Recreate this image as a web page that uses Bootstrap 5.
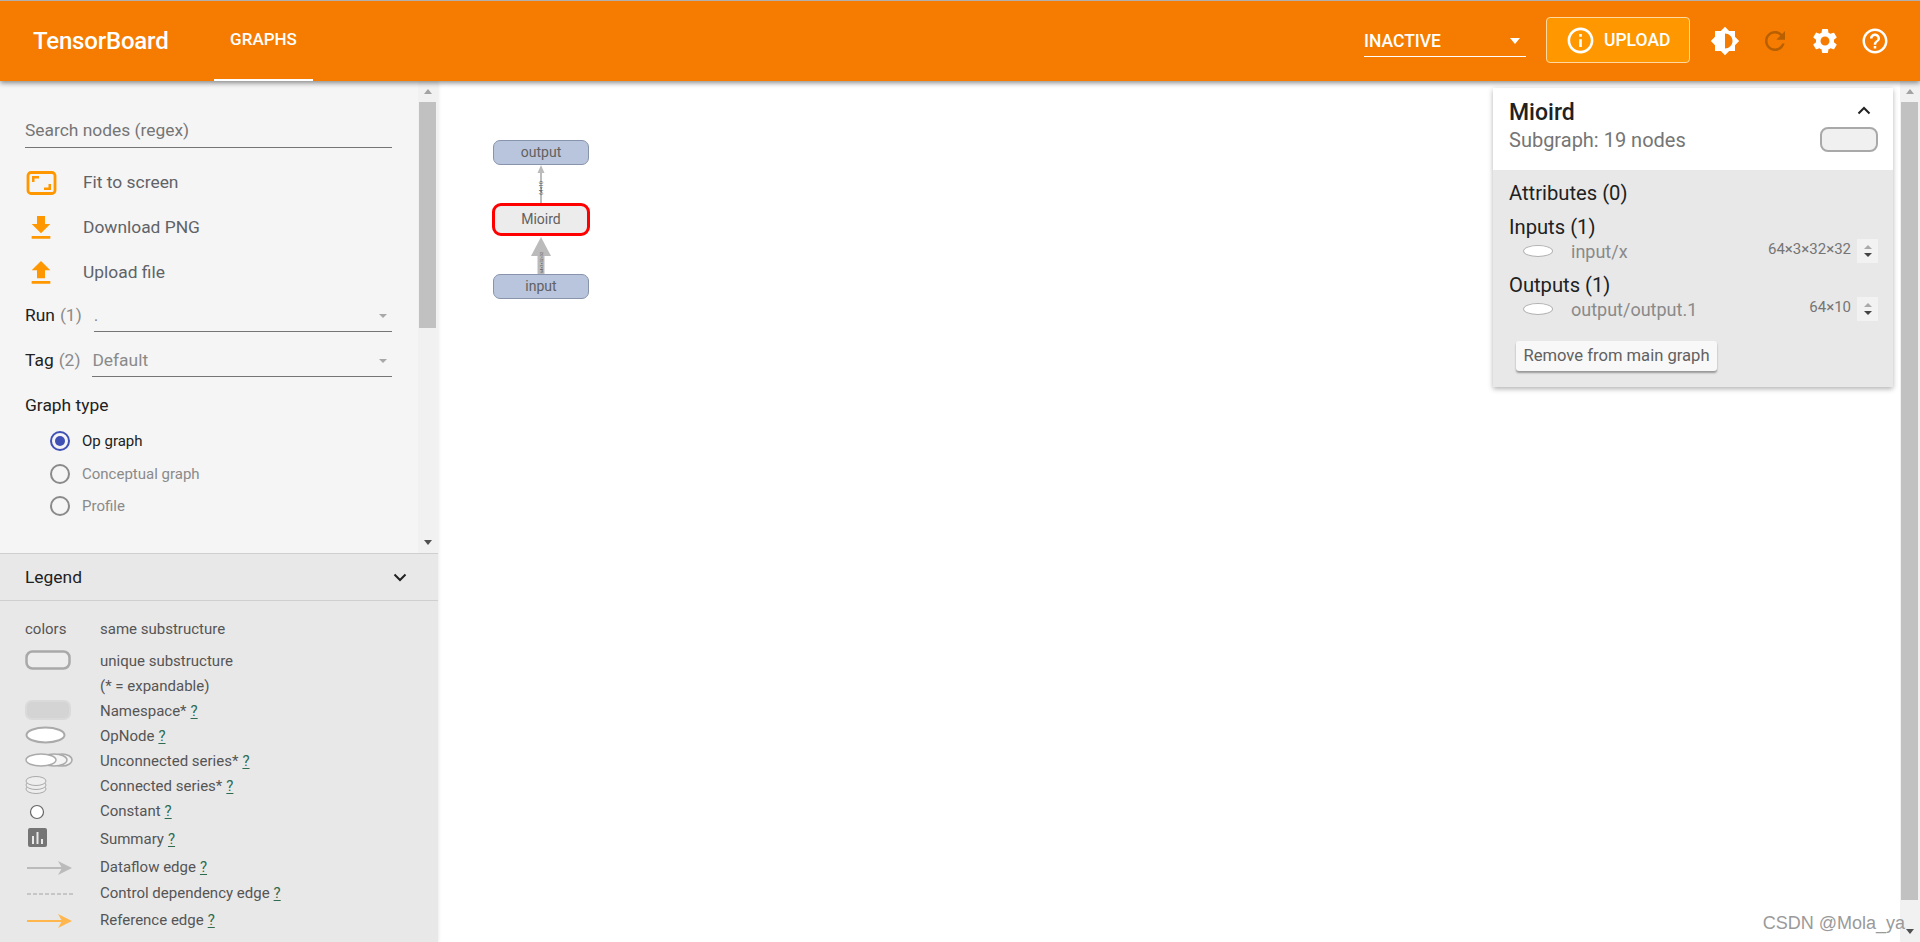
<!DOCTYPE html>
<html lang="en">
<head>
<meta charset="utf-8">
<title>TensorBoard</title>
<link rel="stylesheet" href="https://cdn.jsdelivr.net/npm/bootstrap@5.3.0/dist/css/bootstrap.min.css">
<style>
html,body{height:100%;overflow:hidden;}
body{font-family:Roboto,"Liberation Sans",sans-serif;background:#fff;color:#212121;font-size:15px;}
.tb-page{height:942px;position:relative;}
.tb-head{height:81px;flex:none;background:#f57c00;border-top:1px solid #b0b0b0;color:#fff;position:relative;z-index:5;box-shadow:0 2px 5px rgba(0,0,0,.45);padding-left:33px;}
.tb-brand{font-size:24px;font-weight:500;width:181px;letter-spacing:-.2px;}
.tb-tab{width:99px;height:80px;border-bottom:2px solid #fff;font-size:17px;font-weight:500;}
.tb-run{width:162px;height:31px;margin-top:25px;border-bottom:1px solid #fff;font-size:17.5px;font-weight:500;margin-right:20px;line-height:30px;}
.tb-caret{width:0;height:0;border-left:5.5px solid transparent;border-right:5.5px solid transparent;border-top:6px solid #fff;margin-right:6px;}
.tb-up{width:144px;height:46px;margin-top:16px;background:#ff9800;border:1px solid #ffd9a0;border-radius:4px;color:#fff;font-size:17.5px;font-weight:500;gap:8px;margin-right:20px;padding:0 0 0 18px;}
.tb-tools{padding-right:30px;gap:20px;}
.tb-tools svg{width:30px;height:30px;fill:#fff;}
.tb-tools .tb-off{fill:#b85f00;}
.tb-side{width:438px;flex:none;background:#e8e8e8;position:relative;z-index:2;box-shadow:1px 0 3px rgba(0,0,0,.08);}
.tb-upper{height:472px;flex:none;background:#f5f5f5;}
.tb-ctrl{width:418px;padding:0 26px 0 25px;}
.tb-search{height:67px;border-bottom:1px solid #757575;font-size:17.4px;color:#757575;padding-top:38px;line-height:22px;}
.tb-action{height:45px;font-size:17.4px;color:#5f6368;}
.tb-action svg{fill:#ff9800;}
.tb-ico{width:58px;flex:none;}
.tb-first{margin-top:12px;}
.tb-sel{height:45px;font-size:17.4px;color:#212121;padding-bottom:2px;}
.tb-sel-run{margin-top:-1px;}
.tb-sel .tb-val{flex:1;height:30px;margin-left:12px;border-bottom:1px solid #757575;color:#8a8a8a;line-height:26px;position:relative;margin-top:3px;}
.tb-sel .tb-count{color:#8a8a8a;margin-left:5px;}
.tb-mini{position:absolute;right:5px;top:12px;width:0;height:0;border-left:4px solid transparent;border-right:4px solid transparent;border-top:4px solid #a8a8a8;}
.tb-gt{height:41px;font-size:17.4px;line-height:42px;}
.tb-radio{height:32.5px;padding-left:25px;font-size:15px;color:#8a8a8a;}
.tb-dot{width:20px;height:20px;border:2px solid #8a8a8a;border-radius:50%;margin-right:12px;flex:none;position:relative;}
.tb-radio.tb-on{color:#212121;}
.tb-on .tb-dot{border-color:#3f51b5;}
.tb-on .tb-dot::after{content:"";position:absolute;inset:3px;background:#3f51b5;border-radius:50%;}
.tb-bar{width:20px;flex:none;background:#f1f1f1;position:relative;}
.tb-thumb{position:absolute;background:#c1c1c1;left:1px;right:2px;}
.tb-up-ar,.tb-dn-ar{position:absolute;width:0;height:0;border-left:4.5px solid transparent;border-right:4.5px solid transparent;left:5.5px;}
.tb-up-ar{top:8px;border-bottom:5px solid #a3a3a3;}
.tb-dn-ar{bottom:8px;border-top:5px solid #505050;}
.tb-leghead{height:48px;flex:none;border-top:1px solid #cfcfcf;border-bottom:1px solid #cfcfcf;padding:0 31px 0 25px;font-size:17.4px;}
.tb-leg{padding:16px 0 0 25px;font-size:15px;color:#555;}
.tb-lrow{display:flex;align-items:center;height:25px;}
.tb-lrow-gap{margin-top:7px;}
.tb-lic{width:75px;flex:none;display:flex;align-items:center;padding-bottom:4px;}
.tb-lic-flat{padding-bottom:0;}
.tb-h31{height:31px;}
.tb-h27{height:27px;}
.tb-leg u{color:#2e6b4f;text-underline-offset:2px;}
.tb-main{flex:1;position:relative;background:#fff;}
.tb-node{position:absolute;left:55px;width:96px;background:#b9c5dc;border:1.5px solid #8794ab;border-radius:7px;text-align:center;font-size:14px;color:#616161;height:25px;line-height:22px;}
.tb-sel-node{background:#ececec;border:3px solid #f00;height:33px;width:98px;left:54px;line-height:27px;border-radius:9px;}
.tb-edges{position:absolute;left:0;top:0;}
.tb-info{position:absolute;left:1055px;top:7px;width:400px;box-shadow:0 2px 5px rgba(0,0,0,.3);background:#e8e8e8;z-index:3;}
.tb-ih{height:82px;background:#fff;padding:11px 15px 0 16px;position:relative;}
.tb-it{font-size:23px;font-weight:500;line-height:28px;color:#212121;}
.tb-is{font-size:20px;color:#757575;line-height:26px;}
.tb-ib{padding:10px 15px 20px 16px;height:217px;font-size:20.2px;color:#212121;}
.tb-ih2{line-height:26px;height:34px;}
.tb-ih3{line-height:26px;height:24px;}
.tb-irow{display:flex;align-items:center;height:24px;margin-top:1px;margin-bottom:9px;color:#8a8a8a;font-size:18px;}
.tb-ie{width:30px;height:12px;border:1.5px solid #b0b0b0;background:#fff;border-radius:50%;margin:0 18px 0 14px;flex:none;}
.tb-dim{margin-left:auto;font-size:15px;color:#757575;margin-right:6px;margin-top:-4px;}
.tb-spin{width:21px;height:24px;background:#f2f2f2;display:flex;flex-direction:column;align-items:center;justify-content:center;gap:4px;flex:none;}
.tb-spin i{width:0;height:0;border-left:4px solid transparent;border-right:4px solid transparent;}
.tb-spin .a{border-bottom:4.5px solid #aaa;}
.tb-spin .b{border-top:4.5px solid #444;}
.tb-rm{margin:11px 0 0 7px;height:30px;width:201px;padding:0;background:#f8f8f8;border:0;border-radius:3px;box-shadow:0 2px 2px rgba(0,0,0,.35);font-size:16.6px;color:#616161;}
.tb-pill{width:58px;height:25px;border:2.5px solid #a9a9a9;border-radius:8px;background:#f0f0f0;}
.tb-ipill{position:absolute;right:15px;top:39px;}
.tb-chev{margin:0 7px 6px 0;}
.tb-mark{position:absolute;right:15px;bottom:5px;font-family:"Liberation Sans",sans-serif;font-size:18px;color:#9a9a9a;z-index:4;}
</style>
</head>
<body>
<div class="tb-page d-flex flex-column">
  <header class="tb-head d-flex align-items-start">
    <div class="tb-brand d-flex align-items-center h-100">TensorBoard</div>
    <div class="tb-tab d-flex align-items-center justify-content-center">GRAPHS</div>
    <div class="flex-grow-1"></div>
    <div class="tb-run d-flex align-items-center justify-content-between"><span>INACTIVE</span><span class="tb-caret"></span></div>
    <button type="button" class="btn tb-up d-flex align-items-center justify-content-start">
      <svg width="31" height="31" viewBox="0 0 24 24" fill="#fff"><path d="M11 7h2v2h-2zm0 4h2v6h-2zm1-9C6.480 2 2 6.480 2 12s4.480 10 10 10 10-4.480 10-10S17.520 2 12 2zm0 18c-4.410 0-8-3.590-8-8s3.590-8 8-8 8 3.590 8 8-3.590 8-8 8z"/></svg>
      <span>UPLOAD</span>
    </button>
    <div class="tb-tools d-flex align-items-center h-100">
      <svg viewBox="0 0 24 24"><path d="M20 15.310L23.310 12 20 8.690V4h-4.690L12 .69 8.690 4H4v4.690L.69 12 4 15.310V20h4.690L12 23.310 15.310 20H20v-4.690zM12 18V6c3.310 0 6 2.690 6 6s-2.690 6-6 6z"/></svg>
      <svg class="tb-off" viewBox="0 0 24 24"><path d="M17.650 6.350C16.200 4.900 14.210 4 12 4c-4.420 0-7.990 3.580-7.990 8s3.570 8 7.990 8c3.730 0 6.840-2.550 7.730-6h-2.080c-.82 2.330-3.040 4-5.650 4-3.310 0-6-2.690-6-6s2.690-6 6-6c1.660 0 3.140.69 4.220 1.780L13 11h7V4l-2.350 2.350z"/></svg>
      <svg viewBox="0 0 24 24"><path d="M19.140 12.940c.04-.3.06-.61.06-.94 0-.32-.02-.64-.07-.94l2.030-1.580c.18-.14.23-.41.12-.61l-1.920-3.320c-.12-.22-.37-.29-.59-.22l-2.390.96c-.5-.38-1.030-.7-1.620-.94l-.36-2.540c-.04-.24-.24-.41-.48-.41h-3.840c-.24 0-.43.17-.47.41l-.36 2.540c-.59.24-1.130.57-1.620.94l-2.390-.96c-.22-.08-.47 0-.59.22L2.740 8.870c-.12.21-.08.47.12.61l2.030 1.580c-.05.3-.09.63-.09.94s.02.64.07.94l-2.030 1.580c-.18.14-.23.41-.12.61l1.920 3.320c.12.22.37.29.59.22l2.390-.96c.5.38 1.030.7 1.620.94l.36 2.540c.05.24.24.41.48.41h3.840c.24 0 .44-.17.47-.41l.36-2.540c.59-.24 1.130-.56 1.620-.94l2.390.96c.22.08.47 0 .59-.22l1.920-3.320c.12-.22.07-.47-.12-.61l-2.010-1.580zM12 15.600c-1.980 0-3.600-1.620-3.600-3.600s1.620-3.600 3.600-3.600 3.600 1.620 3.600 3.600-1.620 3.600-3.600 3.600z"/></svg>
      <svg viewBox="0 0 24 24"><path d="M11 18h2v-2h-2v2zm1-16C6.480 2 2 6.480 2 12s4.480 10 10 10 10-4.480 10-10S17.520 2 12 2zm0 18c-4.410 0-8-3.590-8-8s3.590-8 8-8 8 3.590 8 8-3.590 8-8 8zm0-14c-2.210 0-4 1.790-4 4h2c0-1.100.9-2 2-2s2 .9 2 2c0 2-3 1.750-3 5h2c0-2.250 3-2.500 3-5 0-2.210-1.790-4-4-4z"/></svg>
    </div>
  </header>

  <div class="d-flex flex-grow-1" style="min-height:0">
    <aside class="tb-side d-flex flex-column">
      <div class="tb-upper d-flex">
        <div class="tb-ctrl">
          <div class="tb-search">Search nodes (regex)</div>
          <div class="tb-action tb-first d-flex align-items-center">
            <span class="tb-ico"><svg class="d-block" width="32" height="24" viewBox="0 0 32 24"><rect x="3" y="1.500" width="27" height="21" rx="3" fill="none" stroke="#ff9800" stroke-width="2.800"/><path d="M7 5h7v2.500H9.500V11H7zM26 19h-7v-2.500h4.500V13H26z"/></svg></span>Fit to screen
          </div>
          <div class="tb-action d-flex align-items-center">
            <span class="tb-ico"><svg class="d-block" width="32" height="32" viewBox="0 0 24 24"><path d="M19 9h-4V3H9v6H5l7 7 7-7zM5 18v2h14v-2H5z"/></svg></span>Download PNG
          </div>
          <div class="tb-action d-flex align-items-center">
            <span class="tb-ico"><svg class="d-block" width="32" height="32" viewBox="0 0 24 24"><path d="M9 16h6v-6h4l-7-7-7 7h4v6zm-4 2h14v2H5z"/></svg></span>Upload file
          </div>
          <div class="tb-sel tb-sel-run d-flex align-items-center"><span>Run</span><span class="tb-count">(1)</span><div class="tb-val">.<i class="tb-mini"></i></div></div>
          <div class="tb-sel d-flex align-items-center"><span>Tag</span><span class="tb-count">(2)</span><div class="tb-val">Default<i class="tb-mini"></i></div></div>
          <div class="tb-gt">Graph type</div>
          <div class="tb-radio tb-on d-flex align-items-center"><span class="tb-dot"></span>Op graph</div>
          <div class="tb-radio d-flex align-items-center"><span class="tb-dot"></span>Conceptual graph</div>
          <div class="tb-radio d-flex align-items-center"><span class="tb-dot"></span>Profile</div>
        </div>
        <div class="tb-bar"><i class="tb-up-ar"></i><span class="tb-thumb" style="top:21px;height:226px"></span><i class="tb-dn-ar"></i></div>
      </div>
      <div class="tb-leghead d-flex align-items-center justify-content-between">
        <span>Legend</span>
        <svg width="14" height="9" viewBox="0 0 14 9"><path d="M1.500 1.500L7 7l5.500-5.500" fill="none" stroke="#212121" stroke-width="2"/></svg>
      </div>
      <div class="tb-leg">
        <div class="tb-lrow"><span class="tb-lic tb-lic-flat">colors</span>same substructure</div>
        <div class="tb-lrow tb-lrow-gap"><span class="tb-lic"><svg width="46" height="20"><rect x="1.500" y="1.500" width="43" height="17" rx="6" fill="#ededed" stroke="#a9a9a9" stroke-width="2.500"/></svg></span>unique substructure</div>
        <div class="tb-lrow"><span class="tb-lic"></span>(* = expandable)</div>
        <div class="tb-lrow"><span class="tb-lic"><svg width="46" height="20"><rect x="1" y="1" width="44" height="18" rx="6" fill="#d4d4d4" stroke="#dadada" stroke-width="2"/></svg></span>Namespace* <u class="ms-1">?</u></div>
        <div class="tb-lrow"><span class="tb-lic"><svg width="42" height="18"><ellipse cx="20.500" cy="9" rx="19" ry="7.500" fill="#fff" stroke="#aaa" stroke-width="2"/></svg></span>OpNode <u class="ms-1">?</u></div>
        <div class="tb-lrow"><span class="tb-lic"><svg width="48" height="16"><ellipse cx="37" cy="8" rx="10" ry="6" fill="#f5f5f5" stroke="#aaa" stroke-width="1.500"/><ellipse cx="29" cy="8" rx="13" ry="6" fill="#f5f5f5" stroke="#aaa" stroke-width="1.500"/><ellipse cx="16" cy="8" rx="15" ry="6" fill="#fff" stroke="#aaa" stroke-width="1.500"/></svg></span>Unconnected series* <u class="ms-1">?</u></div>
        <div class="tb-lrow"><span class="tb-lic"><svg width="22" height="20"><g fill="#eee" stroke="#aaa"><ellipse cx="11" cy="14" rx="10" ry="4.500"/><ellipse cx="11" cy="10" rx="10" ry="4.500"/><ellipse cx="11" cy="6" rx="10" ry="4.500"/></g></svg></span>Connected series* <u class="ms-1">?</u></div>
        <div class="tb-lrow"><span class="tb-lic tb-lic-flat"><svg width="22" height="16" viewBox="-4 0 22 16"><circle cx="8" cy="8" r="6.500" fill="#fff" stroke="#666" stroke-width="1.200"/></svg></span>Constant <u class="ms-1">?</u></div>
        <div class="tb-lrow tb-h31"><span class="tb-lic"><svg width="22" height="19" viewBox="-3 0 22 19"><rect x="0" y="0" width="19" height="19" rx="2" fill="#757575"/><path d="M4 8h2v8H4zM8.500 4h2v12h-2zM13 11h2v5h-2z" fill="#e8e8e8"/></svg></span>Summary <u class="ms-1">?</u></div>
        <div class="tb-lrow"><span class="tb-lic tb-lic-flat"><svg width="48" height="16"><path d="M2 8h40" stroke="#bbb" stroke-width="2"/><path d="M33 1l14 7-14 7 4-7z" fill="#bbb"/></svg></span>Dataflow edge <u class="ms-1">?</u></div>
        <div class="tb-lrow tb-h27"><span class="tb-lic tb-lic-flat"><svg width="48" height="6"><path d="M2 3h46" stroke="#bbb" stroke-width="1.500" stroke-dasharray="4 2"/></svg></span>Control dependency edge <u class="ms-1">?</u></div>
        <div class="tb-lrow tb-h27"><span class="tb-lic tb-lic-flat"><svg width="48" height="16"><path d="M2 8h40" stroke="#ffb74d" stroke-width="2"/><path d="M33 1l14 7-14 7 4-7z" fill="#ffb74d"/></svg></span>Reference edge <u class="ms-1">?</u></div>
      </div>
    </aside>

    <main class="tb-main">
      <svg class="tb-edges" width="200" height="240">
        <path d="M103 122V90" stroke="#bbb" stroke-width="2" fill="none"/>
        <path d="M103 84l-3.500 8h7z" fill="#bbb"/>
        <path d="M103 193v-22" stroke="#bbb" stroke-width="7" fill="none"/>
        <path d="M103 156l-10 19h20z" fill="#bbb"/>
        <text x="0" y="0" font-size="5" fill="#555" transform="translate(105 114) rotate(-90)" font-family="Roboto">64×10</text>
        <text x="0" y="0" font-size="3.800" fill="#555" transform="translate(104.500 192) rotate(-90)" font-family="Roboto">64×3×32×32</text>
      </svg>
      <div class="tb-node" style="top:59px">output</div>
      <div class="tb-node tb-sel-node" style="top:122px">Mioird</div>
      <div class="tb-node" style="top:193px">input</div>

      <section class="tb-info">
        <div class="tb-ih">
          <div class="d-flex justify-content-between align-items-center"><span class="tb-it">Mioird</span><svg width="14" height="9" viewBox="0 0 14 9" class="tb-chev"><path d="M1.500 7.500L7 2l5.500 5.500" fill="none" stroke="#212121" stroke-width="2"/></svg></div>
          <div class="tb-is">Subgraph: 19 nodes</div>
          <div class="tb-pill tb-ipill"></div>
        </div>
        <div class="tb-ib">
          <div class="tb-ih2">Attributes (0)</div>
          <div class="tb-ih3">Inputs (1)</div>
          <div class="tb-irow"><span class="tb-ie"></span>input/x<span class="tb-dim">64×3×32×32</span><span class="tb-spin"><i class="a"></i><i class="b"></i></span></div>
          <div class="tb-ih3">Outputs (1)</div>
          <div class="tb-irow"><span class="tb-ie"></span>output/output.1<span class="tb-dim">64×10</span><span class="tb-spin"><i class="a"></i><i class="b"></i></span></div>
          <button type="button" class="btn tb-rm">Remove from main graph</button>
        </div>
      </section>
    </main>
    <div class="tb-bar tb-pagebar"><i class="tb-up-ar"></i><span class="tb-thumb" style="top:21px;height:798px"></span><i class="tb-dn-ar"></i></div>
  </div>
  <div class="tb-mark">CSDN @Mola_ya</div>
</div>
<script src="https://cdn.jsdelivr.net/npm/bootstrap@5.3.0/dist/js/bootstrap.bundle.min.js"></script>
</body>
</html>
